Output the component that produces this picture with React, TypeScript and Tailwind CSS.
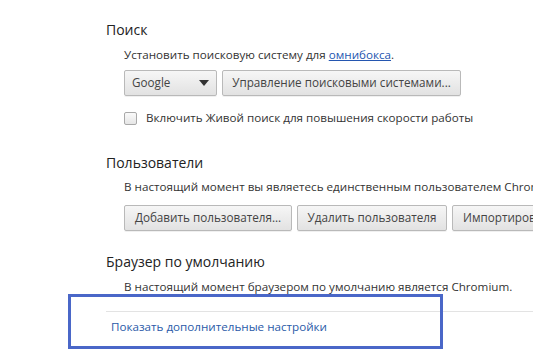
import React from "react";

const btn =
  "h-[26px] px-[10px] flex items-center justify-center whitespace-nowrap rounded-[2px] border border-[#b9b9b9] bg-gradient-to-b from-[#f6f6f6] to-[#e2e2e2] text-[#444] text-[11.7px] shadow-[0_1px_0_rgba(0,0,0,0.06)]";

function Section({ title, className, children }: { title: string; className?: string; children: React.ReactNode }) {
  return (
    <section className={className}>
      <h3 className="text-[14px] leading-[18px] text-[#222]">{title}</h3>
      <div className="pl-[18px]">{children}</div>
    </section>
  );
}

export default function App() {
  return (
    <div className="w-[533px] h-[353px] relative overflow-hidden bg-white font-['Open_Sans',sans-serif] text-[11.65px] text-[#333]">
      <div className="pl-[106px] pt-[21px]">
        <Section title="Поиск">
          <p className="mt-[8px] leading-[16px]">
            Установить поисковую систему для{" "}
            <a className="text-[#2456b0] underline">омнибокса</a>.
          </p>
          <div className="mt-[7px] flex gap-[5px]">
            <div className={btn + " w-[93px] !justify-between !px-[7px]"}>
              <span>Google</span>
              <svg width="10" height="6" viewBox="0 0 10 6">
                <path d="M0 0h10L5 6z" fill="#333" />
              </svg>
            </div>
            <div className={btn + " w-[239px]"}>Управление поисковыми системами...</div>
          </div>
          <label className="mt-[14px] flex items-center h-[16px] gap-[9px]">
            <span className="w-[13px] h-[13px] rounded-[2px] border border-[#a9a9a9] bg-gradient-to-b from-[#fafafa] to-[#e6e6e6]" />
            <span className="whitespace-nowrap">Включить Живой поиск для повышения скорости работы</span>
          </label>
        </Section>

        <Section title="Пользователи" className="mt-[28px]">
          <p className="mt-[7px] leading-[16px] whitespace-nowrap">
            В настоящий момент вы являетесь единственным пользователем Chromium.
          </p>
          <div className="mt-[10px] flex gap-[5px]">
            <div className={btn + " w-[168px] shrink-0"}>Добавить пользователя...</div>
            <div className={btn + " w-[150px] shrink-0"}>Удалить пользователя</div>
            <div className={btn + " w-[150px] shrink-0 !justify-start"}>Импортировать закладки</div>
          </div>
        </Section>

        <Section title="Браузер по умолчанию" className="mt-[22px]">
          <p className="mt-[8px] leading-[16px] whitespace-nowrap">
            В настоящий момент браузером по умолчанию является Chromium.
          </p>
        </Section>

        <div className="mt-[16px] border-t border-[#e3e3e3]" />
        <a className="block mt-[7px] pl-[5px] leading-[16px] text-[#2a5aa8]">Показать дополнительные настройки</a>
      </div>

      <div className="absolute left-[68px] top-[294px] w-[375px] h-[55px] border-[3px] border-[#4a67c8]" />
    </div>
  );
}
